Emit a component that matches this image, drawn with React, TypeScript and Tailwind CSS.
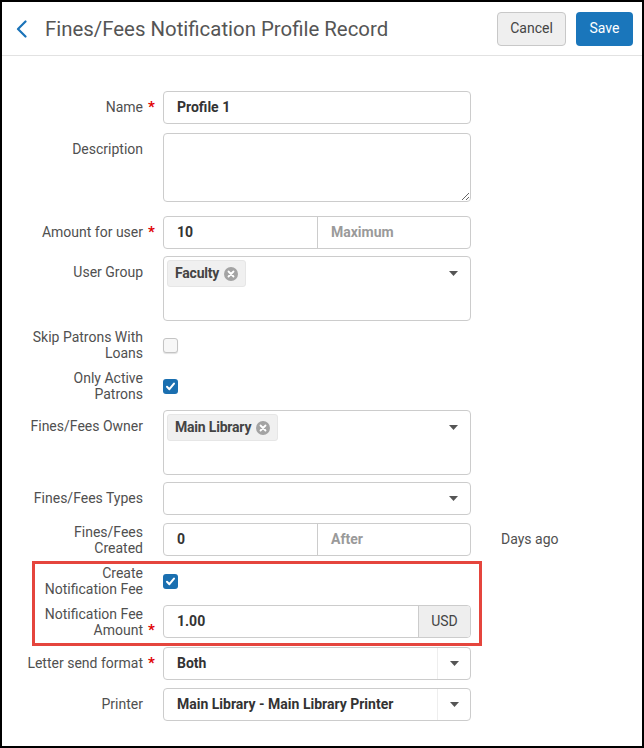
import React from "react"

const labelText = "text-[14px] leading-[16px] text-[#505050] text-right"

function Label({
  w = "w-[161px]",
  req = false,
  reqBottom = false,
  children,
}: {
  w?: string
  req?: boolean
  reqBottom?: boolean
  children: React.ReactNode
}) {
  return (
    <div className={`flex shrink-0 justify-end items-center min-h-[32px] ${w}`}>
      <span className={labelText}>{children}</span>
      <span
        className={`w-[20px] pl-[5px] text-[15px] leading-[16px] font-bold text-[#e00000] ${
          reqBottom ? "self-end" : ""
        }`}
      >
        {req ? "*" : ""}
      </span>
    </div>
  )
}

function Caret() {
  return (
    <svg width="9" height="5" viewBox="0 0 9 5" className="shrink-0">
      <path d="M0 0h9L4.5 5z" fill="#555" />
    </svg>
  )
}

function Checkbox({ checked }: { checked?: boolean }) {
  if (checked) {
    return (
      <div className="w-[15px] h-[15px] rounded-[3px] bg-[#1a6fb0] flex items-center justify-center">
        <svg width="11" height="11" viewBox="0 0 11 11">
          <path d="M2 5.8l2.4 2.4L9 2.6" fill="none" stroke="#fff" strokeWidth="2" strokeLinecap="round" strokeLinejoin="round" />
        </svg>
      </div>
    )
  }
  return <div className="w-[15px] h-[15px] rounded-[3px] border border-[#c4c4c4] bg-[#f7f7f7] shadow-[0_1px_1px_rgba(0,0,0,0.12)]" />
}

function Chip({ text }: { text: string }) {
  return (
    <div className="flex items-center gap-[5px] h-[27px] px-[7px] rounded-[3px] bg-[#f0f0f0] border border-[#e6e6e6]">
      <span className="font-bold text-[14px] tracking-[-0.2px] text-[#444]">{text}</span>
      <span className="w-[14px] h-[14px] rounded-full bg-[#a3a3a3] flex items-center justify-center">
        <svg width="8" height="8" viewBox="0 0 8 8">
          <path d="M1.5 1.5l5 5M6.5 1.5l-5 5" stroke="#fff" strokeWidth="1.8" strokeLinecap="round" />
        </svg>
      </span>
    </div>
  )
}

const box = "border border-[#cccccc] rounded-[4px] bg-white"

export default function App() {
  return (
    <div className="w-[644px] h-[748px] border-2 border-black bg-white overflow-hidden font-['Roboto','Liberation_Sans',sans-serif] text-[14px]">
      {/* Header */}
      <header className="h-[54px] border-b border-[#e2e2e2] flex items-center pl-[14px] pr-[9px]">
        <svg width="11" height="18" viewBox="0 0 11 18" className="shrink-0">
          <path d="M9.5 1.5L2 9l7.5 7.5" fill="none" stroke="#1a73b8" strokeWidth="2.2" strokeLinecap="round" strokeLinejoin="round" />
        </svg>
        <h1 className="ml-[18px] flex-1 text-[20.4px] leading-[24px] text-[#555]">Fines/Fees Notification Profile Record</h1>
        <button className="h-[34px] w-[69px] rounded-[4px] border border-[#c8c8c8] bg-[#efefef] text-[14px] text-[#444]">
          Cancel
        </button>
        <button className="ml-[10px] h-[34px] w-[57px] rounded-[4px] bg-[#1a76bb] text-[14px] text-white">Save</button>
      </header>

      {/* Form */}
      <div className="pt-[35px] flex flex-col">
        <div className="flex items-start">
          <Label req>Name</Label>
          <div className={`${box} w-[308px] h-[33px] px-[13px] flex items-center font-bold text-[#333]`}>Profile 1</div>
        </div>

        <div className="flex items-start mt-[9px]">
          <Label>Description</Label>
          <textarea readOnly className={`${box} w-[308px] h-[69px] resize-y outline-none`} />
        </div>

        <div className="flex items-start mt-[14px]">
          <Label req>Amount for user</Label>
          <div className={`${box} w-[308px] h-[33px] flex`}>
            <div className="w-[154px] border-r border-[#cccccc] px-[13px] flex items-center font-bold text-[#333]">10</div>
            <div className="flex-1 px-[13px] flex items-center font-bold text-[#9a9a9a]">Maximum</div>
          </div>
        </div>

        <div className="flex items-start mt-[7px]">
          <Label>User Group</Label>
          <div className={`${box} w-[308px] h-[65px] flex items-start justify-between pl-[3px] pr-[12px] pt-[3px]`}>
            <Chip text="Faculty" />
            <div className="mt-[11px]">
              <Caret />
            </div>
          </div>
        </div>

        <div className="flex items-center mt-[8px]">
          <Label>
            Skip Patrons With
            <br />
            Loans
          </Label>
          <Checkbox />
        </div>

        <div className="flex items-center mt-[9px]">
          <Label>
            Only Active
            <br />
            Patrons
          </Label>
          <Checkbox checked />
        </div>

        <div className="flex items-start mt-[8px]">
          <Label>Fines/Fees Owner</Label>
          <div className={`${box} w-[308px] h-[65px] flex items-start justify-between pl-[3px] pr-[12px] pt-[3px]`}>
            <Chip text="Main Library" />
            <div className="mt-[11px]">
              <Caret />
            </div>
          </div>
        </div>

        <div className="flex items-start mt-[7px]">
          <Label>Fines/Fees Types</Label>
          <div className={`${box} w-[308px] h-[33px] flex items-center justify-end pr-[12px]`}>
            <Caret />
          </div>
        </div>

        <div className="flex items-center mt-[8px]">
          <Label>
            Fines/Fees
            <br />
            Created
          </Label>
          <div className={`${box} w-[308px] h-[33px] flex`}>
            <div className="w-[154px] border-r border-[#cccccc] px-[13px] flex items-center font-bold text-[#333]">0</div>
            <div className="flex-1 px-[13px] flex items-center font-bold text-[#9a9a9a]">After</div>
          </div>
          <span className="ml-[30px] text-[#505050]">Days ago</span>
        </div>

        {/* Highlighted section */}
        <div className="mt-[5px] ml-[30px] w-[450px] border-[3px] border-[#e5453d] pt-[1px] pb-[5px]">
          <div className="flex items-center">
            <Label w="w-[128px]">
              Create
              <br />
              Notification Fee
            </Label>
            <Checkbox checked />
          </div>
          <div className="flex items-center mt-[8px]">
            <Label w="w-[128px]" req reqBottom>
              Notification Fee
              <br />
              Amount
            </Label>
            <div className={`${box} w-[308px] h-[33px] flex overflow-hidden`}>
              <div className="flex-1 px-[13px] flex items-center font-bold text-[#333]">1.00</div>
              <div className="w-[52px] border-l border-[#cccccc] bg-[#eeeeee] flex items-center justify-center text-[#444]">USD</div>
            </div>
          </div>
        </div>

        <div className="flex items-start mt-[1px]">
          <Label req>Letter send format</Label>
          <div className={`${box} w-[308px] h-[33px] flex`}>
            <div className="flex-1 px-[13px] flex items-center font-bold text-[#333]">Both</div>
            <div className="w-[33px] border-l border-[#eeeeee] flex items-center justify-center">
              <Caret />
            </div>
          </div>
        </div>

        <div className="flex items-start mt-[8px]">
          <Label>Printer</Label>
          <div className={`${box} w-[308px] h-[33px] flex`}>
            <div className="flex-1 px-[13px] flex items-center font-bold text-[#333]">Main Library - Main Library Printer</div>
            <div className="w-[33px] border-l border-[#eeeeee] flex items-center justify-center">
              <Caret />
            </div>
          </div>
        </div>
      </div>
    </div>
  )
}
